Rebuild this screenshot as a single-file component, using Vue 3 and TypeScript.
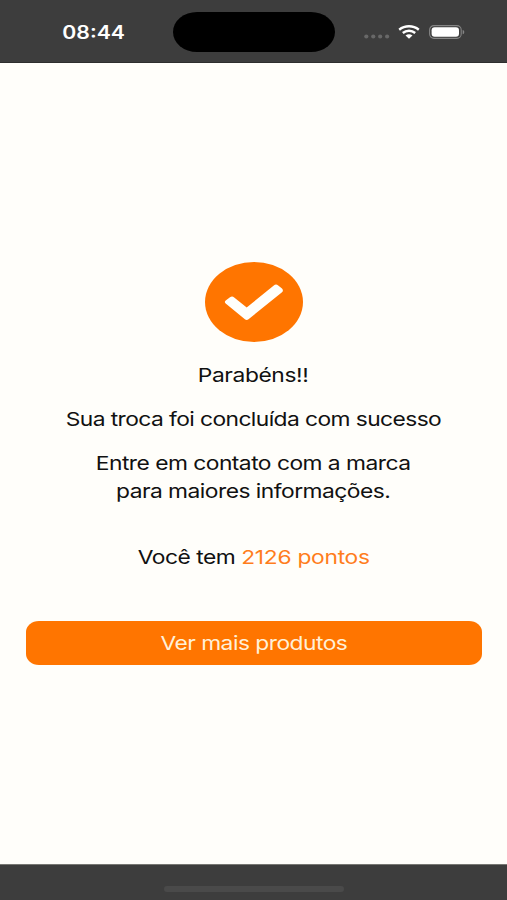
<script setup lang="ts">
const time = '08:44'
const points = 2126
const signalDots = [3, 12, 21, 30]
</script>

<template>
  <div class="screen">
    <header class="status">
      <span class="time">{{ time }}</span>
      <span class="island"></span>
      <div class="indicators">
        <svg class="signal" width="33" height="14" viewBox="0 0 33 14">
          <ellipse v-for="x in signalDots" :key="x" :cx="x * 0.77 + 1" cy="11.4" rx="2.1" ry="2" fill="#686868" />
        </svg>
        <svg class="wifi" width="22" height="14" viewBox="0 0 22 14">
          <g fill="none" stroke="#fff" stroke-width="2.4">
            <path d="M1.2 4.7C6.8 0.1 15.2 0.1 20.8 4.7" />
            <path d="M4.8 8C8.4 5 13.6 5 17.2 8" />
          </g>
          <path d="M7.5 10.5C9.6 8.8 12.4 8.8 14.5 10.5L11 13.7Z" fill="#fff" />
        </svg>
        <svg class="battery" width="36" height="14" viewBox="0 0 36 14">
          <rect x="0.6" y="0.6" width="31.6" height="12.8" rx="4.3" fill="none" stroke="#858585" stroke-width="1.1" />
          <rect x="2.6" y="2.2" width="27.4" height="9.6" rx="3" fill="#fff" />
          <path d="M33.7 5C35.8 5.4 35.8 8.8 33.7 9.2Z" fill="#858585" />
        </svg>
      </div>
    </header>

    <main class="content">
      <svg class="check" width="98" height="80" viewBox="0 0 98 80">
        <ellipse cx="49" cy="40" rx="49" ry="40" fill="#ff7500" />
        <path
          d="M20.7 38.4L25 35.2Q27.2 33.8 29.2 35.4L41.7 45.6L68.8 23.4Q71 21.8 73.2 23.4L77 26.6Q78.8 28.4 77 30.2L43.5 57.2Q41.7 58.6 39.9 57.2L20.7 41.6Q19 40 20.7 38.4Z"
          fill="#fffffb"
        />
      </svg>
      <h1 class="line title"><span class="wide">Parabéns!!</span></h1>
      <p class="line message"><span class="wide">Sua troca foi concluída com sucesso</span></p>
      <p class="line contact">
        <span class="wide">Entre em contato com a marca<br />para maiores informações.</span>
      </p>
      <p class="line balance">
        <span class="wide">Você tem <span class="points">{{ points }} pontos</span></span>
      </p>
      <button class="more" type="button"><span class="wide">Ver mais produtos</span></button>
    </main>

    <footer class="bottom"><span class="home"></span></footer>
  </div>
</template>

<style>
body {
  margin: 0;
}
</style>

<style scoped>
.screen {
  display: flex;
  flex-direction: column;
  box-sizing: border-box;
  width: 507px;
  height: 900px;
  overflow: hidden;
  background: #fffefa;
  color: #111;
  font-family: Inter, "Liberation Sans", sans-serif;
  font-size: 19px;
  line-height: 28px;
}

.status {
  display: grid;
  grid-template-columns: 173px 162px 1fr;
  box-sizing: border-box;
  height: 63px;
  padding-top: 12px;
  background: #3d3d3d;
  border-bottom: 1px solid #2e2e2e;
}

.time {
  justify-self: center;
  padding-left: 12px;
  color: #fff;
  font-size: 18px;
  font-weight: 600;
  line-height: 42px;
  transform: scaleX(1.18);
}

.island {
  height: 40px;
  border-radius: 24px / 20px;
  background: #000;
}

.indicators {
  display: flex;
  align-items: flex-start;
  padding: 13px 0 0 28px;
}

.wifi {
  margin-left: 2px;
}

.battery {
  margin-left: 9px;
}

.content {
  display: flex;
  flex: 1;
  flex-direction: column;
  align-items: center;
  padding: 199px 26px 0;
}

.check {
  margin-left: 1px;
}

.line {
  margin: 0;
  font-size: inherit;
  font-weight: 400;
  text-align: center;
}

.wide {
  display: inline-block;
  letter-spacing: -0.44px;
  transform: scaleX(1.2);
  white-space: nowrap;
}

.title {
  margin-top: 20px;
}

.title .wide {
  letter-spacing: -0.34px;
}

.message,
.contact {
  margin-top: 16px;
}

.message .wide {
  letter-spacing: -0.49px;
}

.balance {
  margin-top: 38px;
}

.balance .wide {
  letter-spacing: -0.4px;
}

.points {
  color: #ff7d1c;
  letter-spacing: -0.24px;
}

.more {
  width: 456px;
  height: 44px;
  margin-top: 49px;
  padding: 2px 0 0;
  border: 0;
  border-radius: 13px / 11px;
  background: #ff7500;
  color: #fff0d8;
  font: inherit;
}

.bottom {
  display: flex;
  justify-content: center;
  box-sizing: border-box;
  height: 36px;
  padding-top: 21px;
  border-top: 1px solid #777773;
  background: #3d3d3d;
}

.home {
  width: 180px;
  height: 6px;
  border-radius: 3px;
  background: #4a4a4a;
}
</style>
